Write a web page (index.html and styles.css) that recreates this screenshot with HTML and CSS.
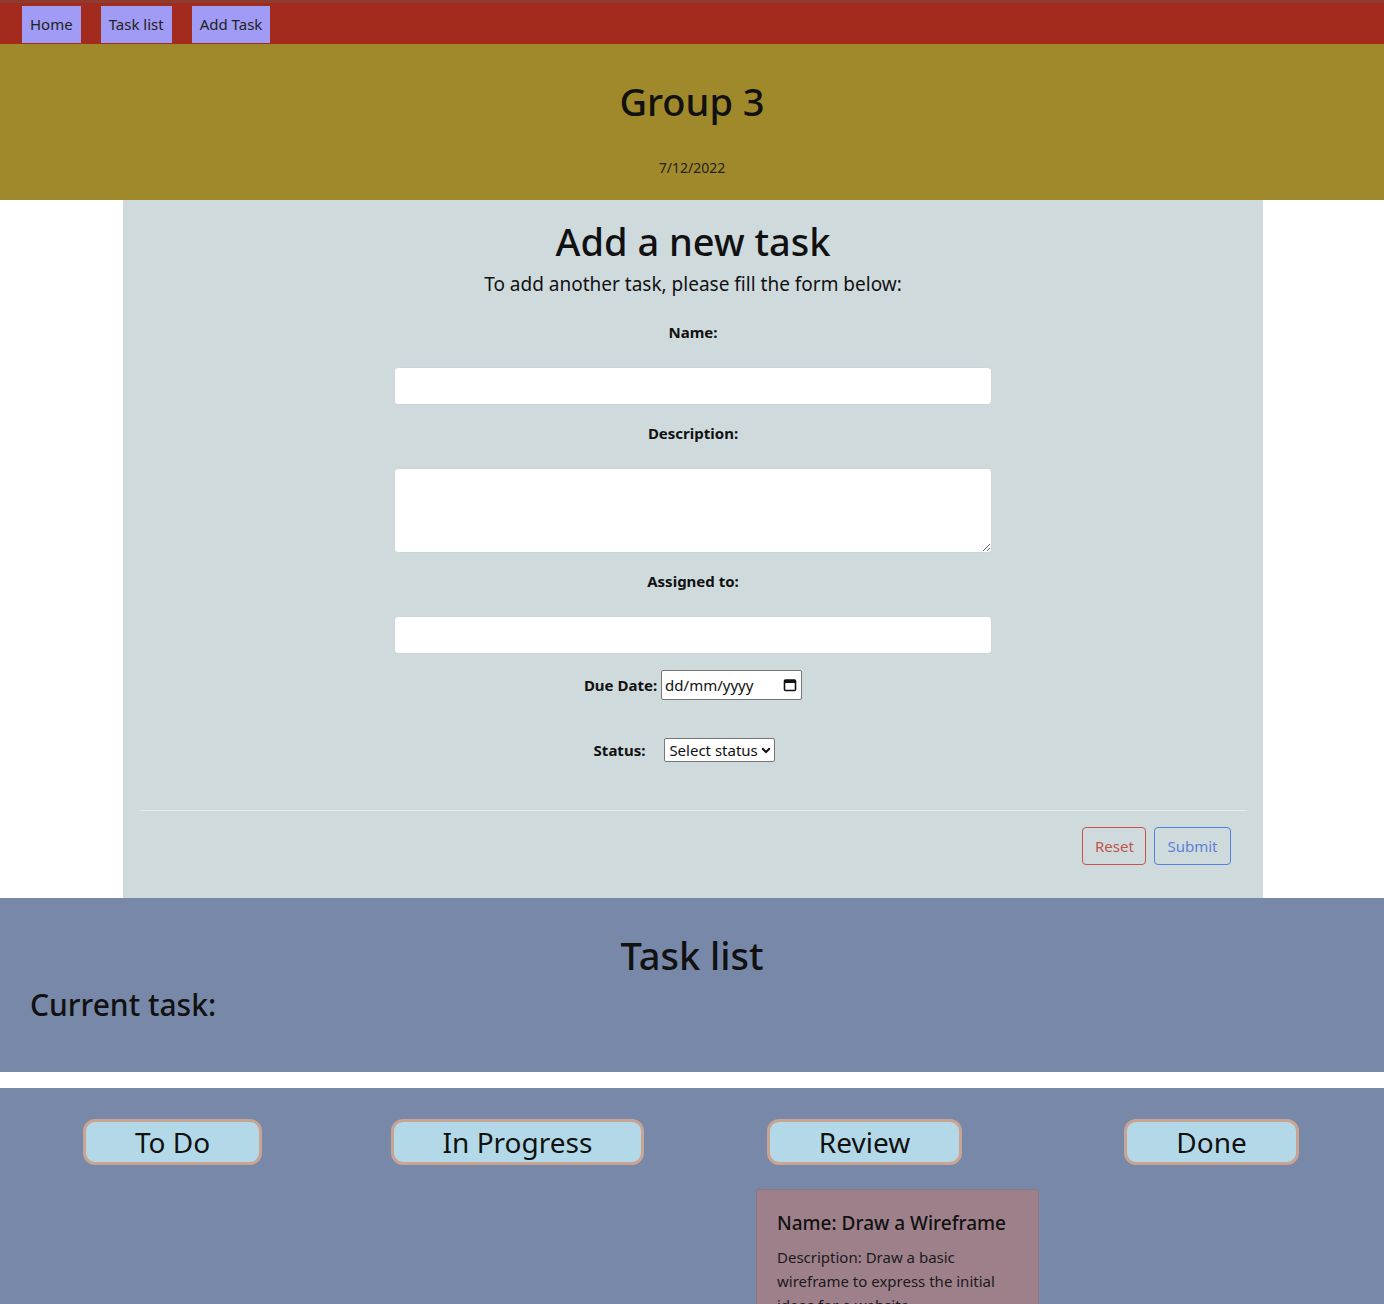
FILE: index.html
```html
<!DOCTYPE html>
<html lang="en">
<head>
<meta charset="utf-8">
<title>Group 3 - Task manager</title>
<link rel="stylesheet" href="styles.css">
</head>
<body>
<nav class="topnav">
  <a class="navbtn" href="#">Home</a>
  <a class="navbtn" href="#">Task list</a>
  <a class="navbtn" href="#">Add Task</a>
</nav>
<header class="banner">
  <h1 class="banner-title">Group 3</h1>
  <p class="banner-date">7/12/2022</p>
</header>
<section class="formwrap">
  <h1 class="form-title">Add a new task</h1>
  <p class="form-sub">To add another task, please fill the form below:</p>
  <form class="taskform">
    <label class="flabel">Name:</label>
    <input class="fcontrol" type="text">
    <label class="flabel">Description:</label>
    <textarea class="fcontrol farea"></textarea>
    <label class="flabel">Assigned to:</label>
    <input class="fcontrol" type="text">
    <div class="daterow">
      <label class="flabel-inline">Due Date:</label>
      <div class="datebox">
        <span class="dateph">dd/mm/yyyy</span>
        <svg class="calicon" width="14" height="14" viewBox="0 0 14 14"><rect x="1.5" y="2" width="11" height="10.5" rx="1" fill="none" stroke="#111" stroke-width="1.6"/><rect x="1.5" y="2" width="11" height="3" fill="#111"/></svg>
      </div>
    </div>
    <div class="statusrow">
      <label class="flabel-inline">Status:</label>
      <div class="selwrap">
        <select class="fselect"><option>Select status</option><option>To Do</option><option>In Progress</option><option>Review</option><option>Done</option></select>
        <svg class="selchev" width="10" height="7" viewBox="0 0 10 7"><path d="M1.2 1.2 L5 5 L8.8 1.2" fill="none" stroke="#111" stroke-width="2"/></svg>
      </div>
    </div>
  </form>
  <div class="formfoot">
    <button class="btn btn-reset" type="button">Reset</button>
    <button class="btn btn-submit" type="button">Submit</button>
  </div>
</section>
<section class="tasklist">
  <h1 class="tl-title">Task list</h1>
  <h2 class="tl-current">Current task:</h2>
</section>
<section class="board">
  <div class="col">
    <div class="colhead">To Do</div>
  </div>
  <div class="col">
    <div class="colhead">In Progress</div>
  </div>
  <div class="col">
    <div class="colhead">Review</div>
    <div class="card">
      <h3 class="card-name">Name: Draw a Wireframe</h3>
      <p class="card-desc">Description: Draw a basic wireframe to express the initial ideas for a website.</p>
    </div>
  </div>
  <div class="col">
    <div class="colhead">Done</div>
  </div>
</section>
</body>
</html>
```
FILE: styles.css
```css
* { box-sizing: border-box; }
html, body { margin: 0; padding: 0; }
body {
  font-family: "Noto Sans", "Open Sans", sans-serif;
  color: #111;
  background: #fff;
  height: 1304px;
  overflow: hidden;
}

/* top nav */
.topnav {
  background: #a32b1e;
  border-top: 3px solid #8e3b30;
  height: 44px;
  display: flex;
  align-items: center;
  gap: 20px;
  padding: 0 0 0 22px;
}
.navbtn {
  background: #a09cf5;
  color: #222;
  text-decoration: none;
  font-size: 15px;
  height: 37px;
  line-height: 37px;
  padding: 0 8px;
  margin-top: 2px;
}

/* header */
.banner {
  background: #9f892b;
  height: 156px;
  text-align: center;
  padding-top: 32px;
}
.banner-title {
  margin: 0;
  font-size: 38px;
  font-weight: 500;
  line-height: 50px;
}
.banner-date {
  margin: 32px 0 0;
  font-size: 14px;
  line-height: 20px;
  color: #222;
}

/* form */
.formwrap {
  width: 1140px;
  margin: 0 0 0 calc(50% - 569px);
  background: #cfdadd;
  height: 698px;
  padding: 17px 16px 0 16px;
  text-align: center;
}
.form-title {
  margin: 0;
  font-size: 38px;
  font-weight: 500;
  line-height: 48px;
}
.form-sub {
  margin: 4px 0 0;
  font-size: 19px;
  line-height: 30px;
}
.taskform {
  display: flex;
  flex-direction: column;
  align-items: center;
  margin-top: 21px;
}
.flabel {
  font-weight: 700;
  font-size: 15px;
  line-height: 24px;
  margin-bottom: 23px;
}
.fcontrol {
  width: 598px;
  height: 38px;
  border: 1px solid #ced4da;
  border-radius: 4px;
  background: #fff;
  font: inherit;
  margin-bottom: 16px;
}
.farea {
  height: 85px;
  resize: vertical;
}
.daterow {
  display: flex;
  align-items: center;
  gap: 4px;
  height: 30px;
}
.flabel-inline {
  font-weight: 700;
  font-size: 15px;
}
.datebox {
  width: 141px;
  height: 30px;
  background: #fff;
  border: 1px solid #767676;
  border-radius: 2px;
  display: flex;
  align-items: center;
  justify-content: space-between;
  padding: 0 4px 0 3px;
  font-size: 15px;
  color: #111;
}
.calicon { display: block; }
.statusrow {
  display: flex;
  align-items: center;
  gap: 19px;
  margin-top: 38px;
  height: 24px;
  margin-left: -17px;
}
.selwrap {
  position: relative;
  height: 24px;
}
.fselect {
  -webkit-appearance: none;
  appearance: none;
  width: 111px;
  height: 24px;
  border: 1px solid #767676;
  border-radius: 2px;
  background: #fff;
  font-family: inherit;
  font-size: 15px;
  color: #111;
  padding: 0 0 0 4px;
}
.selchev {
  position: absolute;
  right: 4px;
  top: 9px;
  pointer-events: none;
}
.formfoot {
  margin: 48px 0 0 1px;
  border-top: 1px solid #e3ebed;
  display: flex;
  justify-content: flex-end;
  gap: 8px;
  padding: 16px 16px 0 0;
}
.btn {
  height: 38px;
  background: transparent;
  border-radius: 4px;
  font-family: inherit;
  font-size: 15px;
  padding: 0 12px;
}
.btn-reset {
  border: 1px solid #c8524e;
  color: #c25450;
  width: 64px;
}
.btn-submit {
  border: 1px solid #5481e0;
  color: #5b82dc;
  width: 77px;
}

/* task list */
.tasklist {
  background: #7788a8;
  height: 174px;
  padding: 33px 30px 0;
}
.tl-title {
  margin: 0;
  text-align: center;
  font-size: 38px;
  font-weight: 500;
  line-height: 48px;
}
.tl-current {
  margin: 6px 0 0;
  font-size: 30px;
  font-weight: 500;
  line-height: 40px;
}

/* board */
.board {
  background: #7788a8;
  margin-top: 16px;
  height: 300px;
  display: grid;
  grid-template-columns: repeat(4, 1fr);
  padding: 31px 0 0 0;
}
.col {
  display: flex;
  flex-direction: column;
  align-items: center;
}
.colhead {
  height: 46px;
  line-height: 40px;
  padding: 0 49px;
  font-size: 28px;
  background: #b3d9e8;
  border: 3px solid #c9a493;
  border-radius: 12px;
  color: #111;
}
.card {
  align-self: flex-start;
  margin: 24px 0 0 66px;
  width: 283px;
  background: #9e808b;
  border: 1px solid #8f7684;
  border-radius: 3px;
  padding: 20px 20px;
  text-align: left;
}
.card-name {
  margin: 0;
  font-size: 19px;
  font-weight: 500;
  line-height: 26px;
}
.card-desc {
  margin: 9px 0 0;
  font-size: 15px;
  line-height: 24px;
  color: #1a1a1a;
}
```
